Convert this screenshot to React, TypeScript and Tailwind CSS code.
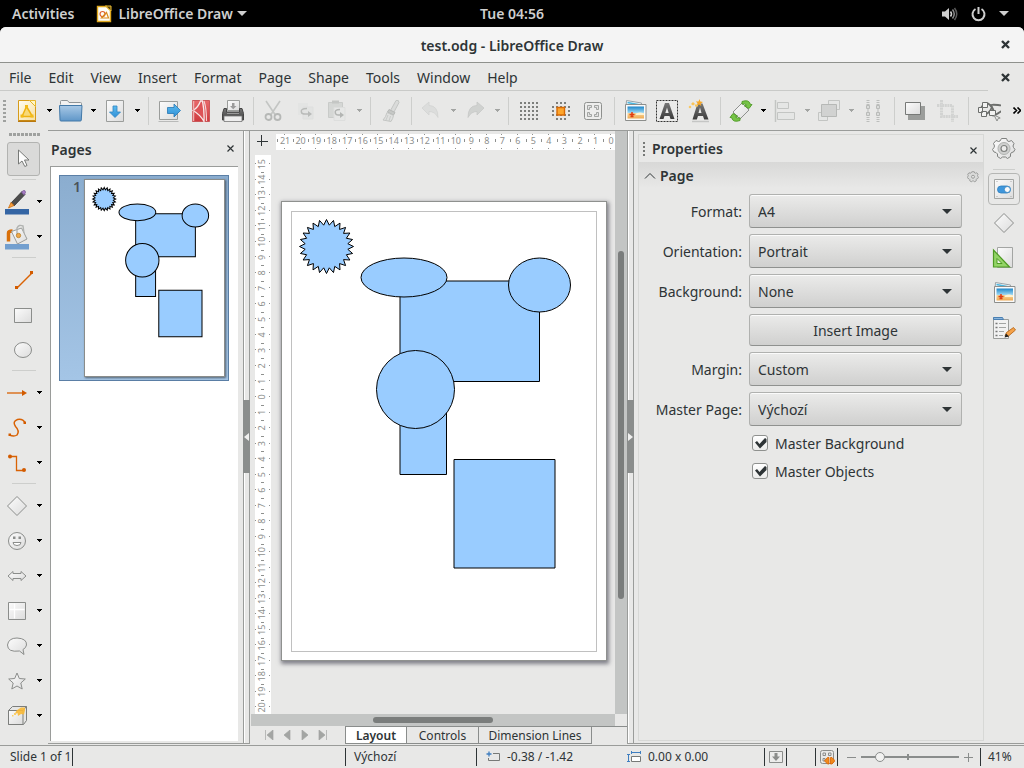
import React, { useState } from "react";
import type { ReactNode } from "react";

/* ---------- small shared pieces ---------- */

function Svg({ size = 24, children }: { size?: number; children: ReactNode }) {
  return (
    <svg width={size} height={size} viewBox="0 0 24 24" fill="none" className="shrink-0" aria-hidden="true">
      {children}
    </svg>
  );
}

function Arrow({ dim = false }: { dim?: boolean }) {
  return (
    <svg width="5" height="3" viewBox="0 0 5 3" aria-hidden="true">
      <path d="M0 0h5v1H4v1H3v1H2V2H1V1H0z" fill={dim ? "#a3a5a3" : "#000"} />
    </svg>
  );
}

function MenuArrow({ label, dim }: { label: string; dim?: boolean }) {
  return (
    <button type="button" aria-label={label} className="flex h-8 w-3 shrink-0 items-center justify-center">
      <Arrow dim={dim} />
    </button>
  );
}

function CloseIcon({ bold = false }: { bold?: boolean }) {
  return (
    <svg width="9" height="9" viewBox="0 0 9 9" aria-hidden="true">
      <path d={bold ? "M1 1l7 7M8 1l-7 7" : "M1.500 1.500l6 6M7.500 1.500l-6 6"} stroke="#2e3436" strokeWidth={bold ? 2.4 : 1.2} />
    </svg>
  );
}

function Defs() {
  return (
    <svg width="0" height="0" className="absolute" aria-hidden="true">
      <defs>
        <linearGradient id="paper" x1="0" y1="0" x2="1" y2="1">
          <stop offset="0" stopColor="#fcfcfc" />
          <stop offset="1" stopColor="#dcdcdc" />
        </linearGradient>
        <linearGradient id="gold" x1="0" y1="0" x2="1" y2="1">
          <stop offset="0" stopColor="#fffdf4" />
          <stop offset="1" stopColor="#f6dfa0" />
        </linearGradient>
        <linearGradient id="folder" x1="0" y1="0" x2="0" y2="1">
          <stop offset="0" stopColor="#a9c9e6" />
          <stop offset="1" stopColor="#5f96c8" />
        </linearGradient>
        <linearGradient id="blue" x1="0" y1="0" x2="0" y2="1">
          <stop offset="0" stopColor="#5cbcf0" />
          <stop offset="1" stopColor="#2f8fd6" />
        </linearGradient>
        <linearGradient id="red" x1="0" y1="0" x2="0" y2="1">
          <stop offset="0" stopColor="#e8696b" />
          <stop offset="1" stopColor="#cf3a3e" />
        </linearGradient>
        <linearGradient id="dark" x1="0" y1="0" x2="0" y2="1">
          <stop offset="0" stopColor="#777" />
          <stop offset="1" stopColor="#3c3c3c" />
        </linearGradient>
        <linearGradient id="sky" x1="0" y1="0" x2="0" y2="1">
          <stop offset="0" stopColor="#1d86c9" />
          <stop offset=".55" stopColor="#a5dcf5" />
          <stop offset=".56" stopColor="#f7d79a" />
          <stop offset="1" stopColor="#eea850" />
        </linearGradient>
      </defs>
    </svg>
  );
}

/* ---------- toolbar icons ---------- */

const icons = {
  newDoc: (
    <Svg>
      <path d="M3.500 1.500h11l6 6v14h-17z" fill="url(#gold)" stroke="#d69b1a" />
      <path d="M3 22.200h18" stroke="#b9780e" strokeWidth="1.600" />
      <path d="M14.500 1.500h6v6z" fill="#fff6c4" stroke="#e6b52a" />
      <path d="M11.500 7.500L17.500 17.500H7z" fill="#f8d978" stroke="#eeb211" strokeWidth="1.500" />
      <path d="M10 6h3v3h-3zM5.500 15.500h3v3h-3zM15.500 15.500h3v3h-3z" fill="#f3bb18" />
    </Svg>
  ),
  open: (
    <Svg>
      <path d="M1.500 5.500V2.500q0-1 1-1h6l1.500 2h11.500q1 0 1 1v3" fill="#f2f2f2" stroke="#8f9496" />
      <path d="M.5 6.500h22.500l-.7 14.500q0 1-1 1H2q-1 0-1-1z" fill="url(#folder)" stroke="#4379a8" />
    </Svg>
  ),
  save: (
    <Svg>
      <path d="M3.500 1.500h17v21h-17z" fill="url(#paper)" stroke="#9b9d9b" />
      <path d="M10 7h4v6h3.500L12 18.500 6.500 13H10z" fill="url(#blue)" stroke="#2f87c4" strokeWidth=".8" />
    </Svg>
  ),
  exportDoc: (
    <Svg>
      <path d="M2.500 2.500h18v18h-18z" fill="url(#paper)" stroke="#9b9d9b" />
      <path d="M1.500 22.500h20" stroke="#b9bab9" />
      <path d="M10.500 8.500H17V5l6.500 6.500L17 18v-3.500h-6.500z" fill="url(#blue)" stroke="#2677b4" strokeWidth=".8" />
    </Svg>
  ),
  pdf: (
    <Svg>
      <path d="M3.500 1.500h17v21h-17z" fill="url(#red)" stroke="#c9585a" />
      <path d="M4 11.500Q9.500 8 11.500 2h2Q15.500 12 15 22.500 11 15.500 4 11.500z" fill="#dd5357" stroke="#f7e9e9" strokeWidth="1.300" />
      <path d="M15 2q2.500 7 2.500 20" stroke="#f3d2d2" strokeWidth="1.200" />
      <path d="M4.500 2v20" stroke="#efb1b1" strokeWidth="1.500" />
    </Svg>
  ),
  print: (
    <Svg>
      <path d="M6.500 1.500h12v10h-12z" fill="url(#paper)" stroke="#9b9d9b" />
      <path d="M11 4h2.500v3h2l-3.300 3.300L9 7h2z" fill="#9a9a9a" />
      <path d="M5.500 9.500H3l-1.500 5V21h21v-6.500L21 9.500h-2.500V13h-13z" fill="url(#dark)" stroke="#444" />
      <path d="M3 17h18v5.500H3z" fill="#eeeeee" stroke="#777" strokeWidth=".8" />
      <path d="M6 14.500h12" stroke="#999" />
    </Svg>
  ),
  cut: (
    <Svg>
      <path d="M5 2l9 13.500M19 2l-9 13.500" stroke="#c3c5c3" strokeWidth="1.600" />
      <circle cx="7.500" cy="18" r="3" stroke="#b6b8b6" strokeWidth="1.800" />
      <circle cx="16.500" cy="18" r="3" stroke="#b6b8b6" strokeWidth="1.800" />
    </Svg>
  ),
  copy: (
    <Svg>
      <path d="M5 4h10v12H5z" fill="#e3e4e3" />
      <path d="M10 8h10v12H10z" fill="#e2e3e2" stroke="#dedfde" />
      <path d="M14 9.500q-7 0-5.500 4 .5 1.500 3.500 1.500h4" stroke="#b9bbb9" strokeWidth="1.500" />
      <path d="M15 12l4 3-4 3z" fill="#b9bbb9" />
    </Svg>
  ),
  paste: (
    <Svg>
      <path d="M3.500 3.500h14v15h-14z" fill="#d5d7d5" stroke="#c9cbc9" />
      <path d="M7 1.500h7v3H7z" fill="#c4c6c4" />
      <path d="M9 8.500h11v13H9z" fill="#e6e7e6" stroke="#dddedd" />
      <path d="M15 10.500q-6 0-4.500 4 .5 1.500 2.500 1.500h3" stroke="#b3b5b3" strokeWidth="1.500" />
      <path d="M15 13l4 3-4 3z" fill="#b3b5b3" />
    </Svg>
  ),
  brush: (
    <Svg>
      <path d="M17 1.500q3-1 3 2L15 13l-3.500-1.500z" fill="#dadbda" stroke="#c3c5c3" />
      <path d="M10 10.500l6 3-1.500 2.500-6-3z" fill="#c6c8c6" stroke="#b7b9b7" />
      <path d="M8 13.500Q7 18 4 21l8 1.500q2-3 2.500-6z" fill="#dfe0df" stroke="#c3c5c3" />
      <path d="M9 16l-2 5M11.500 17L10 22" stroke="#c9cbc9" />
    </Svg>
  ),
  undo: (
    <Svg>
      <path d="M3 9l7-6v3.500q9 0 9 12Q16 12.500 10 12.500V16z" fill="#dcdddc" stroke="#d2d3d2" strokeWidth=".8" />
    </Svg>
  ),
  redo: (
    <Svg>
      <path d="M21 9l-7-6v3.500q-9 0-9 12 3-6 9-6V16z" fill="#d0d2d0" stroke="#c6c8c6" strokeWidth=".8" />
    </Svg>
  ),
  grid: (
    <Svg>
      <path
        d="M3 4h2M7 4h2M11 4h2M15 4h2M19 4h2M3 8h2M7 8h2M11 8h2M15 8h2M19 8h2M3 12h2M7 12h2M11 12h2M15 12h2M19 12h2M3 16h2M7 16h2M11 16h2M15 16h2M19 16h2M3 20h2M7 20h2M11 20h2M15 20h2M19 20h2"
        stroke="#5a5c5a"
        strokeWidth="1.500"
      />
    </Svg>
  ),
  snap: (
    <Svg>
      <path
        d="M7 4h2M11 4h2M15 4h2M3 8h2M7 8h2M11 8h2M15 8h2M19 8h2M3 12h2M19 12h2M3 16h2M7 16h2M11 16h2M15 16h2M19 16h2M7 20h2M11 20h2M15 20h2"
        stroke="#5a5c5a"
        strokeWidth="1.500"
      />
      <path d="M8 8.500h7.500V16H8z" fill="#fda62d" stroke="#d96a04" strokeWidth="1.400" />
    </Svg>
  ),
  fit: (
    <Svg>
      <rect x="3.500" y="3.500" width="17" height="17" rx="2" fill="#ededec" stroke="#8e908e" />
      <path
        d="M6.500 10.500v-4h4v2h-2v2zM13.500 6.500h4v4h-2v-2h-2zM6.500 13.500v4h4v-2h-2v-2zM17.500 13.500v4h-4v-2h2v-2z"
        stroke="#9b9d9b"
        fill="#e2e2e2"
        strokeWidth=".9"
      />
    </Svg>
  ),
  image: (
    <Svg>
      <path d="M3.500 1.500l15 2.500-2 15-14-3z" fill="#f4f6f7" stroke="#9aa3a8" />
      <path d="M4.500 3.500l13 2.500" stroke="#4bb6e0" strokeWidth="1.500" />
      <path d="M2.500 5.500h20.500v16H2.500z" fill="#fafafa" stroke="#8c8e8c" />
      <path d="M4.500 7.500h16.500v12H4.500z" fill="url(#sky)" />
      <path d="M9 13v5M6.500 15.500h5M7.500 17.500h3" stroke="#e03c12" strokeWidth="1.500" />
      <path d="M13 14.500q4-2 8 0v1.500h-8z" fill="#fff2cf" />
    </Svg>
  ),
  text: (
    <Svg>
      <rect x="1.500" y="1.500" width="21" height="21" fill="#ebebea" stroke="#333" strokeDasharray="2 1" />
      <path d="M10 4h4l5.500 16h-4l-1-3H9.500l-1 3h-4zM12 8.500L10.300 14h3.400z" fill="url(#dark)" fillRule="evenodd" />
    </Svg>
  ),
  fontwork: (
    <Svg>
      <path d="M10.500 4.500h5L21.500 20.500h-4.300l-1.200-3.500h-5l-1.200 3.500H5.500zM13 8.500l-1.500 5.500h3z" fill="url(#dark)" fillRule="evenodd" />
      <path d="M5 22.500h17" stroke="#c5c6c5" strokeWidth="1.500" />
      <path
        d="M12.500 0l.8 2.600 2.700.3-2.300 1.500.6 2.600-2.200-1.500-2.300 1.300.9-2.500L8.800 2.600l2.700-.1z"
        fill="#f8a826"
      />
      <path d="M6 3l2 2-2 1.500L4 5zM3 6.500l1.500 1.500L3 9.500 1.500 8zM8 5.500h3v2H8z" fill="#fac456" />
    </Svg>
  ),
  rotate: (
    <Svg>
      <path d="M13 4l7 7-9 9-7-7z" fill="url(#paper)" stroke="#8e908e" />
      <path d="M13 2.500q7-2.500 8.500 3l1.500 0-3 4-4.500-2.500 2-.8q-1-2-4.500-1z" fill="#76c447" stroke="#4e9a24" strokeWidth=".9" />
      <path d="M11 21.500q-7 2.500-8.500-3L1 18.500l3-4 4.500 2.500-2 .8q1 2 4.500 1z" fill="#76c447" stroke="#4e9a24" strokeWidth=".9" />
    </Svg>
  ),
  align: (
    <Svg>
      <path d="M2.500 1v22" stroke="#c3c5c3" strokeWidth="1.500" />
      <path d="M4.500 3.500h11v6h-11zM4.500 13.500h17v7h-17z" fill="#e5e6e5" stroke="#c3c5c3" />
    </Svg>
  ),
  arrange: (
    <Svg>
      <path d="M11.500 1.500h11v9h-11zM1.500 13.500h9v8h-9z" fill="#e5e6e5" stroke="#c3c5c3" />
      <path d="M4.500 5.500h15v12h-15z" fill="#d1d2d1" stroke="#b6b8b6" />
    </Svg>
  ),
  distribute: (
    <Svg>
      <path d="M7 1v5M7 18v5M17 1v5M17 18v5" stroke="#bcbebc" strokeWidth="3" strokeDasharray="1 1" />
      <path d="M5.500 6.500h3v3h-3zM5.500 13.500h3v3h-3zM15.500 6.500h3v3h-3zM15.500 13.500h3v3h-3z" fill="#dadbda" stroke="#b9bbb9" />
      <path d="M7 10v3M17 10v3" stroke="#b9bbb9" />
    </Svg>
  ),
  shadow: (
    <Svg>
      <path d="M5 7h17v14H5z" fill="#9b9d9b" />
      <path d="M2.500 3.500h15v12h-15z" fill="url(#paper)" stroke="#777977" />
    </Svg>
  ),
  crop: (
    <Svg>
      <path d="M6.500 1v16.500H23M2 6.500h15.500V23" stroke="#d2d3d2" strokeWidth="3" strokeDasharray="2 .6" />
    </Svg>
  ),
  points: (
    <Svg>
      <path d="M3.500 10Q8 1 13 6t3 9 7-2-2-7-6 2q-3 8-10 8" stroke="#6c6e6c" strokeWidth="1.800" />
      <path d="M5.500 3.500h5v5h-5zM1.500 8.500h4v5h-4zM4.500 12.500h5v5h-5zM12.500 11.500h6v5h-6z" fill="#f2f2f1" stroke="#6c6e6c" />
      <path d="M17 16l3 6 1.200-2.500 2-.5z" fill="#ededec" stroke="#8b8d8b" />
    </Svg>
  ),
  pointer: (
    <Svg>
      <path d="M7.500 3v14l3.500-3 2.800 5.500 2.200-1-2.500-5.500H18z" fill="#fdfdfd" stroke="#777977" />
    </Svg>
  ),
  line: (
    <Svg>
      <path d="M5 20L20 5" stroke="#d96204" strokeWidth="1.400" />
      <path d="M3 18h3v3H3zM18 3h3v3h-3z" fill="#d25b00" />
    </Svg>
  ),
  rect: (
    <Svg>
      <path d="M2.500 5.500h17v14h-17z" fill="url(#paper)" stroke="#8b8d8b" />
    </Svg>
  ),
  ellipse: (
    <Svg>
      <ellipse cx="11" cy="12" rx="8.500" ry="7.500" fill="url(#paper)" stroke="#8b8d8b" />
    </Svg>
  ),
  arrowLine: (
    <Svg>
      <path d="M2 12h17" stroke="#d96204" strokeWidth="1.300" />
      <path d="M17 9l5 3-5 3z" fill="#d25b00" />
    </Svg>
  ),
  curve: (
    <Svg>
      <path d="M20 7Q18 2.500 12.500 3.500 7 5.500 10.500 10.500 15 15 12 19 9 21 4.500 19" stroke="#d96204" strokeWidth="1.500" />
      <path d="M18.500 5.500H21V8h-2.500zM3.500 17.500H6V20H3.500z" fill="#d25b00" />
    </Svg>
  ),
  connector: (
    <Svg>
      <path d="M6 5.500h5.500v14H18" stroke="#d96204" strokeWidth="1.300" />
      <circle cx="5" cy="5.500" r="2" fill="#d25b00" />
      <circle cx="19" cy="19" r="2" fill="#d25b00" />
    </Svg>
  ),
  diamond: (
    <Svg>
      <path d="M12 2.500l9.500 9.500-9.500 9.500L2.500 12z" fill="url(#paper)" stroke="#8b8d8b" />
    </Svg>
  ),
  smiley: (
    <Svg>
      <circle cx="12" cy="12" r="8.500" fill="url(#paper)" stroke="#8b8d8b" />
      <path d="M8 7.500h2.500V10H8zM13.500 7.500H16V10h-2.500z" fill="#8b8d8b" />
      <path d="M8 13.500h8q0 3-4 3t-4-3z" stroke="#8b8d8b" fill="#fff" />
    </Svg>
  ),
  doubleArrow: (
    <Svg>
      <path d="M3 12l5-4.500v2h8v-2l5 4.500-5 4.500v-2H8v2z" fill="url(#paper)" stroke="#8b8d8b" />
    </Svg>
  ),
  flow: (
    <Svg>
      <path d="M3.500 3.500h17v17h-17z" fill="url(#paper)" stroke="#8b8d8b" />
      <path d="M9.500 4.500v15M4.500 10.500h15" stroke="#fff" strokeWidth="1.300" />
    </Svg>
  ),
  bubble: (
    <Svg>
      <path d="M14.500 17q-12 1.500-12-6 1-7 9.500-7 10 .5 9.500 7-.5 3-3.500 4.500l1 5z" fill="url(#paper)" stroke="#8b8d8b" />
    </Svg>
  ),
  star: (
    <Svg>
      <path d="M12 4l2.300 5.500 6 .5-4.500 4 1.400 6-5.200-3-5.200 3 1.400-6-4.500-4 6-.5z" fill="url(#paper)" stroke="#8b8d8b" />
    </Svg>
  ),
  cube: (
    <Svg>
      <path d="M3.500 6.500l4-4h14v14l-3 4h-15z" fill="#e6e6e5" stroke="#7c7e7c" />
      <path d="M3.500 6.500h14.500v14h-14.500z" fill="url(#paper)" stroke="#7c7e7c" />
      <path d="M18 6.500l3.500-4" stroke="#7c7e7c" />
      <path d="M16 3.500h4v3l-1 4-3-.5-3 2-.5-3-3 1.500 2-4z" fill="#f9b935" opacity=".9" />
      <path d="M9 9h2v2H9zM7 11h1.500v1.500H7z" fill="#fbd069" />
    </Svg>
  ),
  gear: (
    <Svg>
      <path
        d="M9.500 1.500h5l1 2.500 1.500.5 2.500-1 2.500 3-1 2.500.5 1.500 1.500 2-1.500 2.500-2 .5-1 1.500v2.500l-3 2-2-1.500h-3l-2 1.500-3-2V17L4 15.500l-2-.5L.5 12.500 2 10.500l.5-1.500-1-2.500 2.500-3 2.500 1L8 4z"
        fill="url(#paper)"
        stroke="#7f817f"
        strokeLinejoin="round"
      />
      <circle cx="12" cy="11.500" r="6" fill="#cfd0cf" stroke="#b0b2b0" />
      <circle cx="12" cy="11.500" r="3" fill="#ececeb" stroke="#7f817f" strokeWidth="1.200" />
    </Svg>
  ),
  props: (
    <Svg>
      <path d="M2.500 2.500h19v19h-19z" fill="url(#paper)" stroke="#a3a5a3" />
      <rect x="5.500" y="9" width="13" height="7" rx="3.500" fill="#3f97dc" stroke="#2c7dbe" strokeWidth=".8" />
      <circle cx="15.300" cy="12.500" r="3" fill="#fafafa" stroke="#2c7dbe" strokeWidth=".8" />
      <path d="M4.500 4.500h1M18.500 4.500h1M4.500 19.500h1M18.500 19.500h1" stroke="#aaa" />
    </Svg>
  ),
  styles: (
    <Svg>
      <path d="M5.500 1.500h15v20h-15z" fill="url(#paper)" stroke="#a3a5a3" />
      <path d="M1.500 4v17H17.500z" fill="#93d466" stroke="#4e9a24" strokeWidth="1.200" />
      <path d="M5 12.500v5h5z" fill="#eef7e6" stroke="#4e9a24" />
    </Svg>
  ),
  list: (
    <Svg>
      <path d="M1.500 1.500h8l1 2h6v19h-15z" fill="#f2f2f2" stroke="#9b9d9b" />
      <path d="M1.500 3.500v-2h9l1 2z" fill="#8ab6dd" stroke="#4b80b3" />
      <path d="M7 7.500h7M7 11.500h7M7 15.500h5M7 19.500h4" stroke="#a3a5a3" />
      <path d="M3.500 7.500h2M3.500 11.500h2M3.500 15.500h2M3.500 19.500h2" stroke="#777" strokeWidth="1.600" />
      <path d="M13 20l1.500-3.500 7-5 2 2.500-7 6z" fill="#f4a24a" stroke="#b96a1c" strokeWidth=".9" />
      <path d="M12.500 21.500l1.500-4 3 3z" fill="#222" />
    </Svg>
  ),
};

type IconName = keyof typeof icons;

function IconButton({ name, label }: { name: IconName; label: string }) {
  return (
    <button type="button" aria-label={label} className="flex h-8 w-8 shrink-0 items-center justify-center">
      {icons[name]}
    </button>
  );
}

/* ---------- top of the screen ---------- */

function SystemBar() {
  return (
    <header className="grid h-[27px] shrink-0 grid-cols-3 items-center bg-black text-[14px] font-semibold text-[#cfcfcf]">
      <div className="flex items-center">
        <button type="button" className="pl-3">Activities</button>
        <button type="button" className="flex items-center pl-[22px] whitespace-nowrap">
          <svg width="16" height="18" viewBox="0 0 16 18" aria-hidden="true">
            <path d="M1.500 1.500h9l4 4v11h-13z" fill="#fdfdf8" stroke="#e0a81c" strokeWidth="1.400" />
            <path d="M9.500 1h5.500v5z" fill="#5c4716" stroke="#f0c030" />
            <circle cx="6.500" cy="9" r="2.500" fill="none" stroke="#e0602c" strokeWidth="1.200" />
            <path d="M10.500 7.500l2 5.500H5.500z" fill="none" stroke="#d98a1c" strokeWidth="1.200" />
          </svg>
          <span className="pl-1.5">LibreOffice Draw</span>
          <svg width="10" height="5" viewBox="0 0 10 5" className="ml-1" aria-hidden="true">
            <path d="M0 0h10L5 5z" fill="#cfcfcf" />
          </svg>
        </button>
      </div>
      <time className="text-center">Tue 04:56</time>
      <div className="flex items-center justify-end gap-[13px] pr-[15px]">
        <svg width="17" height="16" viewBox="0 0 17 16" fill="none" aria-label="Volume" role="img">
          <path d="M1 5.500h3L8 2v12l-4-3.500H1z" fill="#cfcfcf" />
          <path d="M9.500 5.500q2 2.500 0 5" stroke="#cfcfcf" strokeWidth="1.500" />
          <path d="M11.500 3.500q3.500 4.500 0 9" stroke="#8a8a8a" strokeWidth="1.500" />
          <path d="M13.500 2q4.500 6 0 12" stroke="#5a5a5a" strokeWidth="1.500" />
        </svg>
        <svg width="15" height="16" viewBox="0 0 15 16" fill="none" aria-label="Power" role="img">
          <path d="M4.500 3a6 6 0 1 0 6 0" stroke="#cfcfcf" strokeWidth="2" />
          <path d="M7.500 1v7" stroke="#cfcfcf" strokeWidth="2" />
        </svg>
        <svg width="10" height="5" viewBox="0 0 10 5" aria-hidden="true">
          <path d="M0 0h10L5 5z" fill="#cfcfcf" />
        </svg>
      </div>
    </header>
  );
}

const menus = ["File", "Edit", "View", "Insert", "Format", "Page", "Shape", "Tools", "Window", "Help"];

function MenuBar() {
  return (
    <nav className="flex h-7 shrink-0 items-center justify-between pr-3.5 pl-[9px] text-[14px]">
      <div className="flex gap-[17px]">
        {menus.map((m) => (
          <button type="button" key={m}>
            {m}
          </button>
        ))}
      </div>
      <button type="button" aria-label="Close document">
        <CloseIcon bold />
      </button>
    </nav>
  );
}

type Tool = IconName | "sep" | "gap" | "arrow" | "dim";

const tools: Tool[] = [
  "newDoc", "arrow", "open", "arrow", "save", "arrow", "sep",
  "exportDoc", "pdf", "print", "gap",
  "cut", "copy", "paste", "dim", "sep",
  "brush", "gap",
  "undo", "dim", "redo", "dim", "sep",
  "grid", "snap", "fit", "sep",
  "image", "text", "fontwork", "sep",
  "rotate", "arrow", "align", "dim", "arrange", "dim", "distribute", "sep",
  "shadow", "crop", "sep",
  "points",
];

function Toolbar() {
  return (
    <div role="toolbar" aria-label="Standard" className="flex h-[39px] shrink-0 items-center overflow-hidden">
      <div className="flex w-[11px] shrink-0 flex-col items-center gap-0.5 pr-0.5">
        {[0, 1, 2, 3, 4, 5].map((i) => (
          <span key={i} className="h-0.5 w-[3px] bg-[#9fa19f]" />
        ))}
      </div>
      {tools.map((t, i) => {
        if (t === "sep" || t === "gap") {
          return (
            <div key={i} className={t === "sep" ? "flex w-[10px] shrink-0 justify-center" : "flex w-2 shrink-0 justify-center"}>
              <span className="h-7 w-px bg-[#cdcecc]" />
            </div>
          );
        }
        if (t === "arrow" || t === "dim") return <MenuArrow key={i} label="More options" dim={t === "dim"} />;
        return <IconButton key={i} name={t} label={t} />;
      })}
      <button type="button" aria-label="More tools" className="flex flex-1 justify-center pl-1">
        <svg width="8" height="7" viewBox="0 0 8 7" fill="none" aria-hidden="true">
          <path d="M.5.5l3 3-3 3M4.500.5l3 3-3 3" stroke="#000" strokeWidth="1.600" />
        </svg>
      </button>
    </div>
  );
}

/* ---------- drawing tools ---------- */

function ColorTool({ kind }: { kind: "line" | "fill" }) {
  return (
    <button type="button" aria-label={kind === "line" ? "Line color" : "Fill color"} className="flex h-8 w-[33px] items-center justify-center">
      <svg width="26" height="26" viewBox="0 0 26 26" fill="none" aria-hidden="true">
        {kind === "line" ? (
          <>
            <path d="M1 20h24v5.500H1z" fill="#3465a4" />
            <path d="M7 14L18 2.500l3 3L10 17z" fill="#4d4d4d" stroke="#333" strokeWidth=".8" />
            <path d="M17.500 3l2-1.500q2-.5 2 2L20 6z" fill="#a67cc4" stroke="#7c5a98" strokeWidth=".8" />
            <path d="M7 13.500l3 3-5.500 2.500z" fill="#f8a040" stroke="#cf7010" strokeWidth=".8" />
          </>
        ) : (
          <>
            <path d="M1 20h24v5.500H1z" fill="#729fcf" />
            <path d="M4.500 17.500V9q0-2 4-2" stroke="#d9700a" strokeWidth="3.500" />
            <path d="M7.500 7.500l10-3.500 5.500 11-9.500 5z" fill="url(#paper)" stroke="#9a9c9a" />
            <path d="M13 12V4q2-4 6-2l1 7" stroke="#b1b3b1" strokeWidth="1.400" />
            <circle cx="14.500" cy="11.500" r="2.200" fill="#f0a848" stroke="#b9812c" strokeWidth=".8" />
          </>
        )}
      </svg>
    </button>
  );
}

function Divider() {
  return (
    <div className="flex h-2 w-full justify-center">
      <span className="mt-[3px] h-px w-6 bg-[#cdcecc]" />
    </div>
  );
}

function DrawRow({ name, menu = true }: { name: IconName; menu?: boolean }) {
  return (
    <div className="flex h-[35px] w-full items-center justify-start">
      <button type="button" aria-label={name} className={menu ? "flex h-8 w-[33px] items-center justify-center" : "flex h-8 w-full items-center justify-center"}>
        {icons[name]}
      </button>
      {menu && <MenuArrow label="More shapes" />}
    </div>
  );
}

function DrawTools() {
  return (
    <div role="toolbar" aria-label="Drawing" className="flex w-12 shrink-0 flex-col items-center">
      <div className="flex h-3 gap-px pt-[3px]">
        {[0, 1, 2, 3, 4, 5, 6, 7].map((i) => (
          <span key={i} className="h-[3px] w-[3px] bg-[#9fa19f]" />
        ))}
      </div>
      <button type="button" aria-label="Select" className="mr-0.5 flex h-[34px] w-[33px] shrink-0 items-center justify-center rounded-[3px] border border-[#b2b3b1] bg-[#dadad9]">
        {icons.pointer}
      </button>
      <Divider />
      {(["line", "fill"] as const).map((k) => (
        <div key={k} className="flex h-[35px] w-full items-center">
          <ColorTool kind={k} />
          <MenuArrow label="Choose color" />
        </div>
      ))}
      <Divider />
      <DrawRow name="line" menu={false} />
      <DrawRow name="rect" menu={false} />
      <DrawRow name="ellipse" menu={false} />
      <Divider />
      <DrawRow name="arrowLine" />
      <DrawRow name="curve" />
      <DrawRow name="connector" />
      <Divider />
      <DrawRow name="diamond" />
      <DrawRow name="smiley" />
      <DrawRow name="doubleArrow" />
      <DrawRow name="flow" />
      <DrawRow name="bubble" />
      <DrawRow name="star" />
      <DrawRow name="cube" />
    </div>
  );
}

/* ---------- document ---------- */

function starPoints(cx: number, cy: number, outer: number, inner: number, n: number) {
  const pts: string[] = [];
  for (let i = 0; i < n * 2; i++) {
    const r = i % 2 === 0 ? outer : inner;
    const a = (i * Math.PI) / n - Math.PI / 2;
    pts.push(`${(cx + r * Math.cos(a)).toFixed(2)},${(cy + r * Math.sin(a)).toFixed(2)}`);
  }
  return pts.join(" ");
}

function Drawing({ width, height, margins }: { width: number; height: number; margins?: boolean }) {
  return (
    <svg width={width} height={height} viewBox="0 0 324 458" className="block" role="img" aria-label="Page drawing">
      {margins && <rect x="9.500" y="9.500" width="305" height="440" fill="none" stroke="#c0c0c0" />}
      <g fill="#99ccff" stroke="#000" strokeWidth="1" className="[&>*]:[vector-effect:non-scaling-stroke]">
        <polygon points={starPoints(44.5, 44.5, 27, 21.5, 24)} />
        <rect x="118" y="180" width="46.500" height="92.500" />
        <rect x="118" y="79" width="139.500" height="100.500" />
        <ellipse cx="122" cy="75.500" rx="43" ry="19.500" />
        <ellipse cx="257.500" cy="83" rx="31" ry="27" />
        <circle cx="133.500" cy="187.500" r="39" />
        <rect x="172" y="257.500" width="101" height="108.500" />
      </g>
    </svg>
  );
}

function PagesPanel() {
  return (
    <aside className="mb-px flex w-[195px] shrink-0 flex-col border-y border-[#9a9c9a] pb-0.5">
      <div className="flex h-[35px] shrink-0 items-center justify-between pr-2 pl-[3px]">
        <h2 className="pt-px text-[14px] font-semibold">Pages</h2>
        <button type="button" aria-label="Close pages panel">
          <CloseIcon />
        </button>
      </div>
      <div className="mr-[5px] ml-0.5 flex-1 border-t border-l border-[#9a9c9a] bg-white px-2 pt-2">
        <button
          type="button"
          aria-label="Page 1"
          className="flex h-[206px] w-[170px] items-start border border-[#5b7fa6] bg-linear-to-b from-[#8badcf] to-[#a4c5e6] pt-[3px]"
        >
          <span className="w-6 pt-px pr-[3px] text-right text-[14px] leading-[14px] font-semibold text-[#4a5258]">1</span>
          <span className="border border-[#8a8c8a] bg-white shadow-[1px_1px_2px_rgba(0,0,0,0.5)]">
            <Drawing width={139} height={196} />
          </span>
        </button>
      </div>
    </aside>
  );
}

function Splitter({ side }: { side: "left" | "right" }) {
  return (
    <div className="relative mb-px flex w-[7px] shrink-0 items-center border border-[#9a9c9a] bg-linear-to-r from-white from-20% to-[#e8e8e7] to-20%">
      <button type="button" aria-label={side === "left" ? "Hide pages" : "Hide sidebar"} className="absolute inset-x-[-1px] top-[44%] flex h-[73px] items-center justify-center bg-[#8a8d8c]">
        <svg width="5" height="8" viewBox="0 0 5 8" aria-hidden="true">
          <path d={side === "left" ? "M5 0v8L0 4z" : "M0 0v8l5-4z"} fill="#f0f0ef" />
        </svg>
      </button>
    </div>
  );
}

const STEP = 15.52;
const rulerText = "fill-[#8e908e] font-['Noto_Sans',sans-serif] text-[9px]";

function HorizontalRuler() {
  const n = Array.from({ length: 22 }, (_, i) => i);
  return (
    <svg className="block h-4 w-full bg-white" aria-hidden="true">
      {n.map((v) => {
        const x = 335 - v * STEP;
        return (
          <g key={v}>
            <path d={`M${Math.round(x) - 1} .5h1M${Math.round(x) - 1} 14.500h1M${Math.round(x - STEP / 2) + 0.5} 5v3`} stroke="#8e908e" />
            <text x={x} y="10" textAnchor="middle" className={rulerText}>
              {v}
            </text>
          </g>
        );
      })}
    </svg>
  );
}

function VerticalRuler() {
  const n = Array.from({ length: 36 }, (_, i) => i - 15);
  return (
    <svg className="block h-full w-4 bg-white" aria-hidden="true">
      {n.map((v) => {
        const y = 242 + v * STEP;
        return (
          <g key={v}>
            <path d={`M0 ${Math.round(y) - 0.5}h1M14 ${Math.round(y) - 0.5}h1M6 ${Math.round(y + STEP / 2) + 0.5}h3`} stroke="#8e908e" />
            <text x={0} y={0} textAnchor="middle" transform={`translate(10 ${y}) rotate(-90)`} className={rulerText}>
              {Math.abs(v)}
            </text>
          </g>
        );
      })}
    </svg>
  );
}

const pageNav = [
  { label: "First", d: "M1.500 0v10M9 0v10L3 5z" },
  { label: "Previous", d: "M8 0v10L2 5z" },
  { label: "Next", d: "M2 0v10l6-5z" },
  { label: "Last", d: "M1 0v10l6-5zM8.500 0v10" },
];

function LayerTabs() {
  const tab = "h-full border-r border-[#8a8d8c] text-[12px]";
  return (
    <div className="mb-px flex h-[18px] shrink-0">
      <div className="flex w-24 shrink-0 items-center justify-end gap-2 border-r border-[#8a8d8c] pr-[17px]">
        {pageNav.map((p) => (
          <button type="button" key={p.label} aria-label={p.label}>
            <svg width="10" height="10" viewBox="0 0 10 10" aria-hidden="true">
              <path d={p.d} fill="#a3a5a3" stroke="#a3a5a3" strokeWidth=".7" />
            </svg>
          </button>
        ))}
      </div>
      <div className="flex flex-1 border-t border-[#8a8d8c]">
        <div role="tablist" className="flex border-b border-[#8a8d8c]">
          <button type="button" role="tab" aria-selected className={`${tab} w-[61px] bg-white font-semibold`}>Layout</button>
          <button type="button" role="tab" aria-selected={false} className={`${tab} w-[72px]`}>Controls</button>
          <button type="button" role="tab" aria-selected={false} className={`${tab} w-[113px]`}>Dimension Lines</button>
        </div>
      </div>
    </div>
  );
}

function Workspace() {
  return (
    <main className="flex min-w-0 flex-1 flex-col border-t border-[#9a9c9a]">
      <div className="flex min-h-0 flex-1">
        <div className="flex min-w-0 flex-1 flex-col">
          <div className="flex h-[19px] shrink-0">
            <div className="flex w-[26px] shrink-0 items-start pt-1 pl-[7px]">
              <svg width="11" height="11" viewBox="0 0 11 11" aria-hidden="true">
                <path d="M0 6.500h11M4.500 0v11" stroke="#2e3436" />
              </svg>
            </div>
            <div className="min-w-0 flex-1 pt-[3px]">
              <HorizontalRuler />
            </div>
          </div>
          <div className="flex min-h-0 flex-1">
            <div className="w-[21px] shrink-0 pt-[5px] pl-[5px]">
              <VerticalRuler />
            </div>
            <div className="flex min-w-0 flex-1 items-start justify-center overflow-hidden pt-[51px] pl-px">
              <div className="border border-[#8f918f] bg-white shadow-[1px_2px_4px_1px_rgba(60,60,75,0.6)]">
                <Drawing width={324} height={458} margins />
              </div>
            </div>
          </div>
        </div>
        <div className="w-3 shrink-0 bg-[#c3c5c4] pt-[120px]">
          <div className="ml-[3px] h-[348px] w-1.5 rounded-sm bg-[#7a7d7c]" />
        </div>
      </div>
      <div className="flex h-3 shrink-0 pr-3">
        <div className="ml-px flex flex-1 items-center justify-center bg-[#c3c5c4]">
          <div className="h-1.5 w-[120px] rounded-sm bg-[#7a7d7c]" />
        </div>
      </div>
      <LayerTabs />
    </main>
  );
}

/* ---------- sidebar ---------- */

const field =
  "w-full rounded-[3px] border border-[#b0b1af] border-b-[#8f918f] bg-linear-to-b from-[#ebebea] to-[#d0d0cf] text-[14px] text-[#2e3436] shadow-[inset_0_1px_0_#fbfbfb]";

function SelectField({ id, label, value }: { id: string; label: string; value: string }) {
  return (
    <>
      <label htmlFor={id} className="text-right">{label}</label>
      <div className="relative">
        <select id={id} className={`${field} block h-[34px] appearance-none px-2`}>
          <option>{value}</option>
        </select>
        <svg width="10" height="5" viewBox="0 0 10 5" className="pointer-events-none absolute top-[15px] right-2.5" aria-hidden="true">
          <path d="M0 0h10L5 5z" fill="#2e3436" />
        </svg>
      </div>
    </>
  );
}

function CheckField({ id, label }: { id: string; label: string }) {
  const [on, setOn] = useState(true);
  return (
    <div className="flex h-[22px] items-center gap-[7px]">
      <span className="relative flex h-4 w-4">
        <input
          id={id}
          type="checkbox"
          checked={on}
          onChange={(e) => setOn(e.target.checked)}
          className="h-4 w-4 appearance-none rounded-[3px] border border-[#8f918f] bg-linear-to-b from-white to-[#ececeb]"
        />
        {on && (
          <svg width="16" height="16" viewBox="0 0 16 16" className="pointer-events-none absolute inset-0" aria-hidden="true">
            <path d="M3 7.500L5 6l2.500 3L13 3l1.500 1v3L8 13.500z" fill="#2e3436" />
          </svg>
        )}
      </span>
      <label htmlFor={id}>{label}</label>
    </div>
  );
}

function Sidebar() {
  return (
    <aside className="mb-px flex w-[390px] shrink-0 border-y border-[#9a9c9a] text-[14px]">
      <section className="mt-[3px] mb-0.5 ml-1 flex-1 border border-[#d7d8d6]">
        <div className="flex h-[27px] items-center pr-[5px] pl-1">
          <svg width="2" height="14" viewBox="0 0 2 14" aria-hidden="true">
            <path d="M0 0h2v2H0zM0 4h2v2H0zM0 8h2v2H0zM0 12h2v2H0z" fill="#777977" />
          </svg>
          <h2 className="flex-1 pl-[7px] font-semibold">Properties</h2>
          <button type="button" aria-label="Close sidebar" className="pt-1">
            <CloseIcon />
          </button>
        </div>
        <div className="flex h-[26px] items-center bg-linear-to-b from-[#d8d8d7] to-[#e8e8e7] pr-1 pl-[5px]">
          <svg width="12" height="7" viewBox="0 0 12 7" fill="none" aria-hidden="true">
            <path d="M1 6.500l5-5 5 5" stroke="#2e3436" />
          </svg>
          <h3 className="flex-1 pl-1 font-semibold">Page</h3>
          <button type="button" aria-label="Page options" className="pt-1 opacity-80">
            <svg width="12" height="12" viewBox="0 0 24 24" fill="none" aria-hidden="true">
              <path
                d="M9.500 1.500h5l1 2.500 1.500.5 2.500-1 2.500 3-1 2.500.5 1.500 1.500 2-1.500 2.500-2 .5-1 1.500v2.500l-3 2-2-1.500h-3l-2 1.500-3-2V17L4 15.500l-2-.5L.5 12.500 2 10.500l.5-1.500-1-2.500 2.500-3 2.500 1L8 4z"
                fill="#d9dad9"
                stroke="#8b8d8b"
                strokeWidth="2"
              />
              <circle cx="12" cy="11.500" r="3" fill="#e8e8e7" stroke="#8b8d8b" strokeWidth="2" />
            </svg>
          </button>
        </div>
        <div className="grid grid-cols-[103px_1fr] items-center gap-x-[7px] gap-y-1.5 pt-1.5 pr-[21px]">
          <SelectField id="format" label="Format:" value="A4" />
          <SelectField id="orientation" label="Orientation:" value="Portrait" />
          <SelectField id="background" label="Background:" value="None" />
          <button type="button" className={`${field} col-start-2 h-8`}>Insert Image</button>
          <SelectField id="margin" label="Margin:" value="Custom" />
          <SelectField id="master" label="Master Page:" value="Výchozí" />
          <div className="col-start-2 flex flex-col gap-1.5 pl-[3px]">
            <CheckField id="master-bg" label="Master Background" />
            <CheckField id="master-obj" label="Master Objects" />
          </div>
        </div>
      </section>
      <div className="flex w-10 shrink-0 flex-col items-center pt-0.5">
        <IconButton name="gear" label="Sidebar settings" />
        <div className="flex h-2 items-center">
          <span className="h-px w-[22px] bg-[#cdcecc]" />
        </div>
        <button type="button" aria-label="Properties" className="flex h-8 w-8 items-center justify-center rounded-sm border border-[#b5b6b4]">
          {icons.props}
        </button>
        <div className="flex flex-col gap-[3px] pt-0.5">
          <IconButton name="diamond" label="Shapes" />
          <IconButton name="styles" label="Styles" />
          <IconButton name="image" label="Gallery" />
          <IconButton name="list" label="Navigator" />
        </div>
      </div>
    </aside>
  );
}

/* ---------- status bar ---------- */

function StatusBar() {
  return (
    <footer className="flex h-[23px] shrink-0 items-center border-t border-[#9a9c9a] text-[12px] [&>*]:h-[18px] [&>*]:shrink-0">
      <div className="w-[73px] border-r border-[#2e3436] pl-2.5 whitespace-nowrap">Slide 1 of 1</div>
      <div className="w-[273px] border-r border-[#2e3436]" />
      <div className="w-[131px] border-r border-[#2e3436] pl-2">Výchozí</div>
      <div className="flex w-[148px] items-center gap-1.5 pl-[9px]">
        <svg width="15" height="12" viewBox="0 0 15 12" fill="none" aria-hidden="true">
          <path d="M3 .5v5M.5 3h5" stroke="#3f7ec0" strokeWidth="1.300" />
          <path d="M7 2.500h6.500v7h-11V7" stroke="#777977" />
        </svg>
        <span>-0.38 / -1.42</span>
      </div>
      <div className="flex flex-1 items-center gap-1.5 border-r border-[#2e3436] pl-0.5">
        <svg width="15" height="12" viewBox="0 0 15 12" fill="none" aria-hidden="true">
          <path d="M0 3.500h3M1.500 3.500v7M0 10.500h3M4.500 0v3M13.500 0v3M4.500 1.500h9" stroke="#3f7ec0" />
          <path d="M4.500 5.500h9v5h-9z" fill="#fff" stroke="#777977" />
        </svg>
        <span>0.00 x 0.00</span>
      </div>
      <div className="flex w-[22px] items-center justify-center border-r border-[#2e3436]">
        <svg width="14" height="12" viewBox="0 0 14 12" aria-hidden="true">
          <path d="M.5.5h13v11H.5z" fill="#ececeb" stroke="#8b8d8b" />
          <path d="M5.500 2h3v3.500H11L7 10 3 5.500h2.500z" fill="#8b8d8b" />
        </svg>
      </div>
      <div className="w-[29px] border-r border-[#2e3436]" />
      <div className="flex w-[22px] items-center justify-center border-r border-[#2e3436]">
        <svg width="16" height="16" viewBox="0 0 16 16" fill="none" aria-hidden="true">
          <rect x="1.500" y="1.500" width="13" height="13" rx="2" stroke="#8b8d8b" />
          <path d="M4 4h2.500v2.500H4zM9.500 4H12v2.500H9.500zM4 9.500h2V12H4z" stroke="#8b8d8b" />
          <path d="M10 8.500v6.500H8.500L5.500 11.800 8.500 8.500zM11.500 8.500v6.500H13l3-3.200-3-3.300z" fill="#f08a1c" stroke="#d96204" strokeWidth=".8" />
        </svg>
      </div>
      <div className="flex w-[143px] items-center gap-[5px] border-r border-[#2e3436] pl-[9px] text-[#8a8d8c]">
        <button type="button" aria-label="Zoom out" className="h-px w-[9px] bg-[#8a8d8c]" />
        <div className="relative flex flex-1 items-center">
          <input
            type="range"
            aria-label="Zoom"
            min={0}
            max={100}
            defaultValue={16}
            className="h-2.5 w-full min-w-0 appearance-none bg-transparent [&::-webkit-slider-runnable-track]:h-0.5 [&::-webkit-slider-runnable-track]:bg-[#8a8d8c] [&::-webkit-slider-thumb]:-mt-1 [&::-webkit-slider-thumb]:h-2.5 [&::-webkit-slider-thumb]:w-2.5 [&::-webkit-slider-thumb]:appearance-none [&::-webkit-slider-thumb]:rounded-full [&::-webkit-slider-thumb]:border [&::-webkit-slider-thumb]:border-[#8a8d8c] [&::-webkit-slider-thumb]:bg-[#f2f2f1]"
          />
          <span className="pointer-events-none absolute left-[47%] h-1.5 w-0.5 bg-[#8a8d8c]" />
        </div>
        <button type="button" aria-label="Zoom in" className="mr-[7px]">
          <svg width="9" height="9" viewBox="0 0 9 9" aria-hidden="true">
            <path d="M0 4.500h9M4.500 0v9" stroke="#8a8d8c" />
          </svg>
        </button>
      </div>
      <div className="w-[43px] pl-[7px]">41%</div>
    </footer>
  );
}

export default function App() {
  return (
    <div className="flex h-screen flex-col overflow-hidden bg-black font-['Noto_Sans','Open_Sans',sans-serif] text-[#2e3436]">
      <Defs />
      <SystemBar />
      <div className="flex min-h-0 flex-1 flex-col overflow-hidden rounded-t-md bg-[#e8e8e7]">
        <div className="grid h-9 shrink-0 grid-cols-[1fr_auto_1fr] items-center border-b border-[#8f918d] bg-[#f4f4f4] pr-3.5">
          <h1 className="col-start-2 pt-px pl-3.5 text-[14px] font-semibold">test.odg - LibreOffice Draw</h1>
          <button type="button" aria-label="Close window" className="justify-self-end">
            <CloseIcon bold />
          </button>
        </div>
        <MenuBar />
        <div className="-mt-px mr-9 h-px shrink-0 bg-[#c9cac8]" />
        <Toolbar />
        <div className="flex min-h-0 flex-1">
          <DrawTools />
          <PagesPanel />
          <Splitter side="left" />
          <Workspace />
          <Splitter side="right" />
          <Sidebar />
        </div>
        <StatusBar />
      </div>
    </div>
  );
}
